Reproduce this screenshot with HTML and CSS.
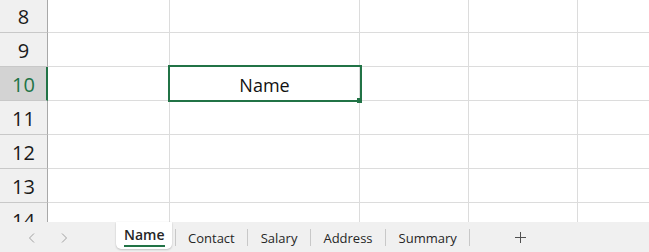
FILE: index.html
```html
<!DOCTYPE html>
<html lang="en">
<head>
<meta charset="utf-8">
<title>Sheet</title>
<link rel="stylesheet" href="styles.css">
</head>
<body>
<div class="app">
  <div class="sheet">
    <div class="grid">
      <div class="row"><div class="rh">8</div><div class="c ca"></div><div class="c cb"></div><div class="c cc"></div><div class="c cd"></div><div class="c ce"></div></div>
      <div class="row"><div class="rh">9</div><div class="c ca"></div><div class="c cb"></div><div class="c cc"></div><div class="c cd"></div><div class="c ce"></div></div>
      <div class="row"><div class="rh rh-sel">10</div><div class="c ca"></div><div class="c cb active-cell"><span class="cell-text">Name</span><div class="selection"><div class="handle"></div></div></div><div class="c cc"></div><div class="c cd"></div><div class="c ce"></div></div>
      <div class="row"><div class="rh">11</div><div class="c ca"></div><div class="c cb"></div><div class="c cc"></div><div class="c cd"></div><div class="c ce"></div></div>
      <div class="row"><div class="rh">12</div><div class="c ca"></div><div class="c cb"></div><div class="c cc"></div><div class="c cd"></div><div class="c ce"></div></div>
      <div class="row"><div class="rh">13</div><div class="c ca"></div><div class="c cb"></div><div class="c cc"></div><div class="c cd"></div><div class="c ce"></div></div>
      <div class="row"><div class="rh">14</div><div class="c ca"></div><div class="c cb"></div><div class="c cc"></div><div class="c cd"></div><div class="c ce"></div></div>
    </div>
  </div>
  <div class="tabbar">
    <div class="nav">
      <svg class="arrow" width="7" height="10" viewBox="0 0 7 10"><path d="M6 0.5 L1.5 5 L6 9.5" fill="none" stroke="#a0a0a0" stroke-width="1"/></svg>
      <svg class="arrow" width="7" height="10" viewBox="0 0 7 10"><path d="M1 0.5 L5.5 5 L1 9.5" fill="none" stroke="#a0a0a0" stroke-width="1"/></svg>
    </div>
    <div class="tab tab-active"><span class="tab-label">Name</span></div>
    <div class="sep sep-first"></div>
    <div class="tab">Contact</div>
    <div class="sep"></div>
    <div class="tab">Salary</div>
    <div class="sep"></div>
    <div class="tab">Address</div>
    <div class="sep"></div>
    <div class="tab">Summary</div>
    <div class="sep"></div>
    <div class="add">
      <svg width="11" height="11" viewBox="0 0 11 11"><path d="M5.5 0 V11 M0 5.5 H11" stroke="#505050" stroke-width="1" fill="none"/></svg>
    </div>
  </div>
</div>
</body>
</html>
```

FILE: styles.css
```css
html, body {
  margin: 0;
  padding: 0;
  background: #ffffff;
}

body {
  font-family: "Open Sans", "Noto Sans", "Liberation Sans", sans-serif;
  color: #1f1f1f;
}

.app {
  width: 649px;
  height: 252px;
  display: flex;
  flex-direction: column;
  overflow: hidden;
}

.sheet {
  height: 222px;
  overflow: hidden;
  flex: none;
}

.grid {
  margin-top: -1px;
}

.row {
  display: flex;
  height: 34px;
}

.rh {
  box-sizing: border-box;
  width: 48px;
  flex: none;
  background: #f0f0f0;
  border-right: 1px solid #a8a8a8;
  border-bottom: 1px solid #c8c8c8;
  display: flex;
  align-items: center;
  justify-content: center;
  font-size: 20px;
  color: #1a1a1a;
  padding-top: 1px;
}

.rh-sel {
  background: #d3d3d3;
  color: #217346;
  border-right: 2px solid #217346;
  padding-left: 1px;
}

.c {
  box-sizing: border-box;
  flex: none;
  border-right: 1px solid #dcdcdc;
  border-bottom: 1px solid #dcdcdc;
  background: #ffffff;
}

.ca { width: 122px; }
.cb { width: 190px; }
.cc { width: 109px; }
.cd { width: 109px; }
.ce { flex: 1; border-right: none; }

.active-cell {
  position: relative;
  display: flex;
  align-items: center;
  justify-content: center;
}

.cell-text {
  font-size: 18px;
  color: #111111;
  line-height: 24px;
  margin-top: 2px;
}

.selection {
  position: absolute;
  left: -2px;
  top: -2px;
  width: 194px;
  height: 37px;
  box-sizing: border-box;
  border: 2px solid #217346;
}

.handle {
  position: absolute;
  left: 187px;
  top: 31px;
  width: 5px;
  height: 5px;
  background: #217346;
}

.tabbar {
  height: 30px;
  flex: none;
  background: #f0f0f0;
  display: flex;
  align-items: center;
  font-size: 13px;
  color: #262626;
}

.nav {
  box-sizing: border-box;
  width: 116px;
  flex: none;
  display: flex;
  align-items: center;
  gap: 26px;
  padding-left: 28px;
  padding-top: 1px;
}

.arrow {
  display: block;
}

.tab {
  padding: 0 12.5px;
  line-height: 19px;
  margin-top: 2px;
  white-space: nowrap;
}

.tab-active {
  align-self: flex-start;
  height: 27px;
  box-sizing: border-box;
  background: #ffffff;
  border-radius: 0 0 5px 5px;
  box-shadow: 0 1px 2px rgba(0, 0, 0, 0.18), 0 0 1px rgba(0, 0, 0, 0.12);
  padding: 3px 7px 0 8px;
  margin-top: 0;
  font-size: 14px;
  font-weight: 600;
  color: #262626;
}

.tab-label {
  display: block;
  line-height: 19px;
  padding-bottom: 1px;
  border-bottom: 2px solid #217346;
}

.sep {
  width: 1px;
  height: 17px;
  background: #c8c8c8;
  flex: none;
  margin-top: 1px;
}

.sep-first {
  margin-left: 3px;
}

.add {
  margin-left: 45px;
  display: flex;
  align-items: center;
  padding-top: 1px;
}

.add svg {
  display: block;
}
```
